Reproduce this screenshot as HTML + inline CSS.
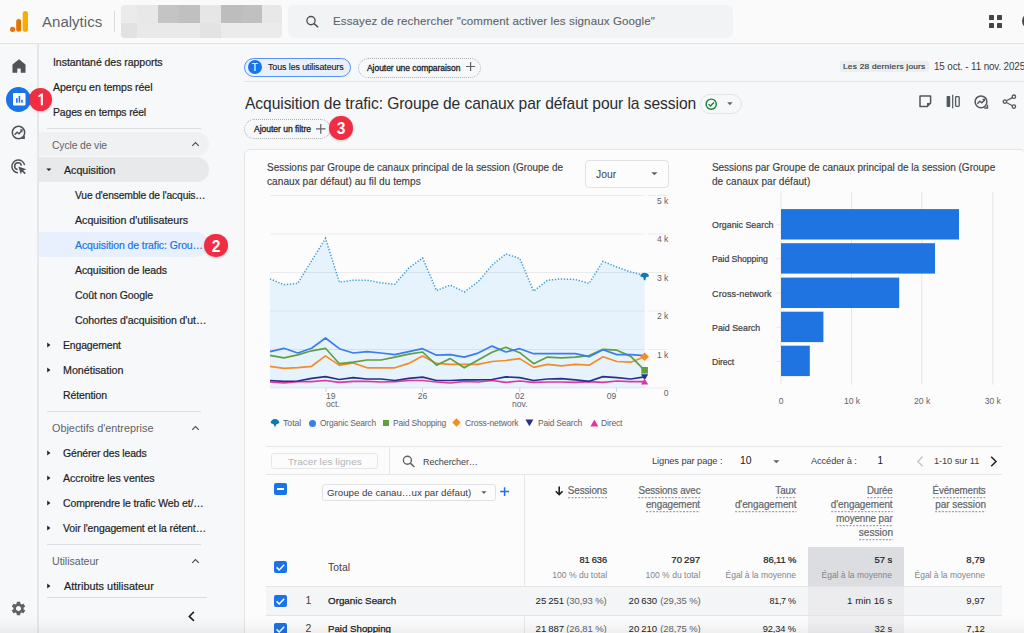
<!DOCTYPE html>
<html><head><meta charset="utf-8"><style>
html,body{margin:0;padding:0;}
body{width:1024px;height:633px;overflow:hidden;position:relative;background:#f6f8fa;font-family:"Liberation Sans",sans-serif;}
.t{position:absolute;white-space:nowrap;}
svg{position:absolute;overflow:visible;}
</style></head><body>
<div style="position:absolute;left:0px;top:0px;width:1024px;height:43px;background:#fafafa;"></div>
<div style="position:absolute;left:0px;top:43px;width:1024px;height:1px;background:#e2e3e5;"></div>
<svg style="left:0;top:0" width="40" height="40"><circle cx="12.6" cy="29.3" r="2.6" fill="#e8710a"/><rect x="16.2" y="19" width="5" height="12.8" rx="2.5" fill="#e37400"/><rect x="22.7" y="10.9" width="5.3" height="20.9" rx="2.65" fill="#f9ab00"/></svg>
<div class="t" id="t0" style="left:41.60px;transform:scaleX(1.0061);transform-origin:0 0;top:15.09px;font-size:14.9px;line-height:14.9px;color:#5f6368;font-weight:400;letter-spacing:0.027px;">Analytics</div>
<div style="position:absolute;left:114px;top:11px;width:1px;height:21px;background:#dadce0;"></div>
<div style="position:absolute;left:121px;top:5px;width:161px;height:33px;border-radius:4px;overflow:hidden"><div style="position:absolute;left:0px;top:0;width:16.5px;height:18px;background:#ebebeb"></div><div style="position:absolute;left:16px;top:0;width:21.5px;height:18px;background:#e8e8e8"></div><div style="position:absolute;left:37px;top:0;width:21.5px;height:18px;background:#c4c4c4"></div><div style="position:absolute;left:58px;top:0;width:21.5px;height:18px;background:#c0c0c0"></div><div style="position:absolute;left:79px;top:0;width:21.0px;height:18px;background:#e6e6e6"></div><div style="position:absolute;left:99.5px;top:0;width:21.5px;height:18px;background:#bdbdbd"></div><div style="position:absolute;left:120.5px;top:0;width:21.0px;height:18px;background:#c0c0c0"></div><div style="position:absolute;left:141px;top:0;width:20.5px;height:18px;background:#e8e8e8"></div><div style="position:absolute;left:0px;top:18px;width:16.5px;height:15px;background:#e2e2e2"></div><div style="position:absolute;left:16px;top:18px;width:21.5px;height:15px;background:#e9e9e9"></div><div style="position:absolute;left:37px;top:18px;width:21.5px;height:15px;background:#e9e9e9"></div><div style="position:absolute;left:58px;top:18px;width:21.5px;height:15px;background:#e9e9e9"></div><div style="position:absolute;left:79px;top:18px;width:21.0px;height:15px;background:#e3e3e3"></div><div style="position:absolute;left:99.5px;top:18px;width:21.5px;height:15px;background:#ebebeb"></div><div style="position:absolute;left:120.5px;top:18px;width:21.0px;height:15px;background:#ebebeb"></div><div style="position:absolute;left:141px;top:18px;width:20.5px;height:15px;background:#ebebeb"></div></div>
<div style="position:absolute;left:288px;top:5px;width:445px;height:33px;background:#f1f3f4;border-radius:6px"></div>
<svg style="left:305px;top:15px" width="16" height="14" viewBox="0 0 16 14"><circle cx="6" cy="5.6" r="4.1" fill="none" stroke="#4d5156" stroke-width="1.35"/><line x1="9" y1="8.6" x2="13.2" y2="12.2" stroke="#4d5156" stroke-width="1.5"/></svg>
<div class="t" id="t1" style="left:332.60px;transform:scaleX(1.0315);transform-origin:0 0;top:15.62px;font-size:11.2px;line-height:11.2px;color:#5f6368;font-weight:400;letter-spacing:0.110px;-webkit-text-stroke:0.1px #5f6368;">Essayez de rechercher "comment activer les signaux Google"</div>
<div style="position:absolute;left:989px;top:15px;width:5px;height:5px;background:#444746;border-radius:0.6px"></div>
<div style="position:absolute;left:997px;top:15px;width:5px;height:5px;background:#444746;border-radius:0.6px"></div>
<div style="position:absolute;left:989px;top:23px;width:5px;height:5px;background:#444746;border-radius:0.6px"></div>
<div style="position:absolute;left:997px;top:23px;width:5px;height:5px;background:#444746;border-radius:0.6px"></div>
<div style="position:absolute;left:1021.6px;top:13.3px;width:16px;height:16px;border-radius:50%;background:#44474b"></div>
<div style="position:absolute;left:36.6px;top:44px;width:2px;height:589px;background:#e6e7ea;"></div>
<svg style="left:12px;top:59px" width="14" height="14" viewBox="0 0 14 14"><path d="M0.8 5.6 L7 0.6 L13.2 5.6 V13.4 H9 V9.2 H5 V13.4 H0.8 Z" fill="#505459" stroke="#505459" stroke-width="0.6" stroke-linejoin="round"/></svg>
<div style="position:absolute;left:6px;top:87px;width:25px;height:25px;border-radius:50%;background:#1a73e8"></div>
<svg style="left:12.5px;top:93px" width="13" height="13" viewBox="0 0 13 13"><rect x="0" y="0" width="12.5" height="12.5" rx="1.2" fill="#fff"/><rect x="3" y="5.2" width="1.6" height="4.5" fill="#1a73e8"/><rect x="5.6" y="3" width="1.6" height="6.7" fill="#1a73e8"/><rect x="8.2" y="6.8" width="1.6" height="2.9" fill="#1a73e8"/></svg>
<svg style="left:11px;top:125px" width="16" height="16" viewBox="0 0 16 16"><circle cx="7.5" cy="7.5" r="6.2" fill="none" stroke="#505459" stroke-width="1.5"/><path d="M3.6 9.8 L6.2 7.2 L8 8.8 L10.6 6" fill="none" stroke="#505459" stroke-width="1.5"/><path d="M8.6 4.6 L11.8 4.2 L11.4 7.4 Z" fill="#505459"/><path d="M10.2 13.9 L13.9 13.9 L13.9 10.2 Z" fill="#505459"/></svg>
<svg style="left:11px;top:159px" width="17" height="16" viewBox="0 0 17 16"><path d="M13.6 6.2 A6.4 6.4 0 1 0 7 13.8" fill="none" stroke="#505459" stroke-width="1.5"/><path d="M10.4 6.6 A3.4 3.4 0 1 0 6.6 10.6" fill="none" stroke="#505459" stroke-width="1.5"/><path d="M7.4 7.4 L15.4 10.2 L12.2 11.4 L14.8 14 L13.6 15.2 L11 12.6 L9.8 15.6 Z" fill="#505459"/></svg>
<svg style="left:10px;top:600.4px" width="17" height="17" viewBox="0 0 24 24"><path fill="#5f6368" d="M19.14 12.94c.04-.3.06-.61.06-.94 0-.32-.02-.64-.07-.94l2.03-1.58c.18-.14.23-.41.12-.61l-1.92-3.32c-.12-.22-.37-.29-.59-.22l-2.39.96c-.5-.38-1.03-.7-1.62-.94l-.36-2.54c-.04-.24-.24-.41-.48-.41h-3.84c-.24 0-.43.17-.47.41l-.36 2.54c-.59.24-1.13.57-1.62.94l-2.39-.96c-.22-.08-.47 0-.59.22L2.74 8.87c-.12.21-.08.47.12.61l2.03 1.58c-.05.3-.09.63-.09.94s.02.64.07.94l-2.03 1.58c-.18.14-.23.41-.12.61l1.92 3.32c.12.22.37.29.59.22l2.39-.96c.5.38 1.03.7 1.62.94l.36 2.54c.05.24.24.41.48.41h3.84c.24 0 .44-.17.47-.41l.36-2.54c.59-.24 1.13-.56 1.62-.94l2.39.96c.22.08.47 0 .59-.22l1.92-3.32c.12-.22.07-.47-.12-.61l-2.01-1.58zM12 15.6c-1.98 0-3.6-1.62-3.6-3.6s1.62-3.6 3.6-3.6 3.6 1.62 3.6 3.6-1.62 3.6-3.6 3.6z"/></svg>
<div class="t" id="t2" style="left:52.50px;transform:scaleX(0.9789);transform-origin:0 0;top:57.26px;font-size:10.8px;line-height:10.8px;color:#1f1f1f;font-weight:400;letter-spacing:-0.069px;-webkit-text-stroke:0.2px #1f1f1f;">Instantané des rapports</div>
<div class="t" id="t3" style="left:52.50px;transform:scaleX(0.9816);transform-origin:0 0;top:81.96px;font-size:10.8px;line-height:10.8px;color:#1f1f1f;font-weight:400;letter-spacing:-0.063px;-webkit-text-stroke:0.2px #1f1f1f;">Aperçu en temps réel</div>
<div class="t" id="t4" style="left:52.50px;transform:scaleX(0.9630);transform-origin:0 0;top:107.06px;font-size:10.8px;line-height:10.8px;color:#1f1f1f;font-weight:400;letter-spacing:-0.129px;-webkit-text-stroke:0.2px #1f1f1f;">Pages en temps réel</div>
<div style="position:absolute;left:46.6px;top:128px;width:154px;height:1px;background:#dadce0;"></div>
<div style="position:absolute;left:39px;top:132.4px;width:170px;height:23.6px;background:#f0f1f3;border-radius:0 12px 12px 0"></div>
<div class="t" id="t5" style="left:52.20px;transform:scaleX(0.9606);transform-origin:0 0;top:139.96px;font-size:10.8px;line-height:10.8px;color:#5f6368;font-weight:400;letter-spacing:-0.130px;">Cycle de vie</div>
<svg style="left:190.5px;top:141px" width="9" height="6" viewBox="0 0 9 6"><path d="M1.2 4.9 L4.5 1.6 L7.8 4.9" fill="none" stroke="#4d5156" stroke-width="1.25"/></svg>
<div style="position:absolute;left:39px;top:157.2px;width:170.4px;height:24.6px;background:#e8e9eb;border-radius:0 12.3px 12.3px 0"></div>
<svg style="left:45.8px;top:167.8px" width="6" height="4" viewBox="0 0 6 4"><path d="M0.3 0.4 L5.4 0.4 L2.85 3.1 Z" fill="#202124"/></svg>
<div class="t" id="t6" style="left:63.70px;transform:scaleX(0.9906);transform-origin:0 0;top:165.06px;font-size:10.8px;line-height:10.8px;color:#1f1f1f;font-weight:400;letter-spacing:-0.030px;-webkit-text-stroke:0.2px #1f1f1f;">Acquisition</div>
<div class="t" id="t7" style="left:75.00px;transform:scaleX(0.9539);transform-origin:0 0;top:190.06px;font-size:10.8px;line-height:10.8px;color:#1f1f1f;font-weight:400;letter-spacing:-0.162px;-webkit-text-stroke:0.2px #1f1f1f;">Vue d'ensemble de l'acquis…</div>
<div class="t" id="t8" style="left:75.00px;transform:scaleX(0.9901);transform-origin:0 0;top:214.86px;font-size:10.8px;line-height:10.8px;color:#1f1f1f;font-weight:400;letter-spacing:-0.029px;-webkit-text-stroke:0.2px #1f1f1f;">Acquisition d'utilisateurs</div>
<div style="position:absolute;left:39px;top:232px;width:169px;height:25px;background:#e8f0fe;border-radius:0 12.5px 12.5px 0"></div>
<div class="t" id="t9" style="left:75.00px;transform:scaleX(0.9711);transform-origin:0 0;top:239.86px;font-size:10.8px;line-height:10.8px;color:#1a73e8;font-weight:400;letter-spacing:-0.093px;-webkit-text-stroke:0.2px #1a73e8;">Acquisition de trafic: Grou…</div>
<div class="t" id="t10" style="left:75.00px;transform:scaleX(0.9739);transform-origin:0 0;top:264.86px;font-size:10.8px;line-height:10.8px;color:#1f1f1f;font-weight:400;letter-spacing:-0.084px;-webkit-text-stroke:0.2px #1f1f1f;">Acquisition de leads</div>
<div class="t" id="t11" style="left:75.00px;transform:scaleX(0.9730);transform-origin:0 0;top:289.86px;font-size:10.8px;line-height:10.8px;color:#1f1f1f;font-weight:400;letter-spacing:-0.098px;-webkit-text-stroke:0.2px #1f1f1f;">Coût non Google</div>
<div class="t" id="t12" style="left:75.00px;transform:scaleX(0.9763);transform-origin:0 0;top:314.86px;font-size:10.8px;line-height:10.8px;color:#1f1f1f;font-weight:400;letter-spacing:-0.078px;-webkit-text-stroke:0.2px #1f1f1f;">Cohortes d'acquisition d'ut…</div>
<svg style="left:47.1px;top:342.4px" width="4" height="6" viewBox="0 0 4 6"><path d="M0.2 0.4 L3.4 3 L0.2 5.6 Z" fill="#202124"/></svg>
<div class="t" id="t13" style="left:63.40px;transform:scaleX(0.9670);transform-origin:0 0;top:340.06px;font-size:10.8px;line-height:10.8px;color:#1f1f1f;font-weight:400;letter-spacing:-0.136px;-webkit-text-stroke:0.2px #1f1f1f;">Engagement</div>
<svg style="left:47.1px;top:367.4px" width="4" height="6" viewBox="0 0 4 6"><path d="M0.2 0.4 L3.4 3 L0.2 5.6 Z" fill="#202124"/></svg>
<div class="t" id="t14" style="left:63.40px;transform:scaleX(0.9920);transform-origin:0 0;top:365.06px;font-size:10.8px;line-height:10.8px;color:#1f1f1f;font-weight:400;letter-spacing:-0.027px;-webkit-text-stroke:0.2px #1f1f1f;">Monétisation</div>
<div class="t" id="t15" style="left:63.40px;transform:scaleX(0.9707);transform-origin:0 0;top:390.06px;font-size:10.8px;line-height:10.8px;color:#1f1f1f;font-weight:400;letter-spacing:-0.101px;-webkit-text-stroke:0.2px #1f1f1f;">Rétention</div>
<div style="position:absolute;left:47px;top:411.3px;width:153.5px;height:1px;background:#dadce0;"></div>
<div class="t" id="t16" style="left:52.20px;transform:scaleX(1.0024);transform-origin:0 0;top:423.36px;font-size:10.8px;line-height:10.8px;color:#5f6368;font-weight:400;letter-spacing:0.007px;">Objectifs d'entreprise</div>
<svg style="left:190.5px;top:424.5px" width="9" height="6" viewBox="0 0 9 6"><path d="M1.2 4.9 L4.5 1.6 L7.8 4.9" fill="none" stroke="#4d5156" stroke-width="1.25"/></svg>
<svg style="left:47.1px;top:450.4px" width="4" height="6" viewBox="0 0 4 6"><path d="M0.2 0.4 L3.4 3 L0.2 5.6 Z" fill="#202124"/></svg>
<div class="t" id="t17" style="left:63.40px;transform:scaleX(0.9643);transform-origin:0 0;top:448.06px;font-size:10.8px;line-height:10.8px;color:#1f1f1f;font-weight:400;letter-spacing:-0.125px;-webkit-text-stroke:0.2px #1f1f1f;">Générer des leads</div>
<svg style="left:47.1px;top:475.4px" width="4" height="6" viewBox="0 0 4 6"><path d="M0.2 0.4 L3.4 3 L0.2 5.6 Z" fill="#202124"/></svg>
<div class="t" id="t18" style="left:63.40px;transform:scaleX(0.9832);transform-origin:0 0;top:473.06px;font-size:10.8px;line-height:10.8px;color:#1f1f1f;font-weight:400;letter-spacing:-0.053px;-webkit-text-stroke:0.2px #1f1f1f;">Accroitre les ventes</div>
<svg style="left:47.1px;top:500.4px" width="4" height="6" viewBox="0 0 4 6"><path d="M0.2 0.4 L3.4 3 L0.2 5.6 Z" fill="#202124"/></svg>
<div class="t" id="t19" style="left:63.40px;transform:scaleX(0.9672);transform-origin:0 0;top:498.06px;font-size:10.8px;line-height:10.8px;color:#1f1f1f;font-weight:400;letter-spacing:-0.113px;-webkit-text-stroke:0.2px #1f1f1f;">Comprendre le trafic Web et/…</div>
<svg style="left:47.1px;top:525.4px" width="4" height="6" viewBox="0 0 4 6"><path d="M0.2 0.4 L3.4 3 L0.2 5.6 Z" fill="#202124"/></svg>
<div class="t" id="t20" style="left:63.40px;transform:scaleX(0.9682);transform-origin:0 0;top:523.06px;font-size:10.8px;line-height:10.8px;color:#1f1f1f;font-weight:400;letter-spacing:-0.104px;-webkit-text-stroke:0.2px #1f1f1f;">Voir l'engagement et la rétent…</div>
<div style="position:absolute;left:46.9px;top:544px;width:154px;height:1px;background:#dadce0;"></div>
<div class="t" id="t21" style="left:52.30px;transform:scaleX(0.9847);transform-origin:0 0;top:556.26px;font-size:10.8px;line-height:10.8px;color:#5f6368;font-weight:400;letter-spacing:-0.045px;">Utilisateur</div>
<svg style="left:190.5px;top:557.5px" width="9" height="6" viewBox="0 0 9 6"><path d="M1.2 4.9 L4.5 1.6 L7.8 4.9" fill="none" stroke="#4d5156" stroke-width="1.25"/></svg>
<svg style="left:47.1px;top:582.9px" width="4" height="6" viewBox="0 0 4 6"><path d="M0.2 0.4 L3.4 3 L0.2 5.6 Z" fill="#202124"/></svg>
<div class="t" id="t22" style="left:63.70px;transform:scaleX(1.0067);transform-origin:0 0;top:581.36px;font-size:10.8px;line-height:10.8px;color:#1f1f1f;font-weight:400;letter-spacing:0.019px;-webkit-text-stroke:0.2px #1f1f1f;">Attributs utilisateur</div>
<div style="position:absolute;left:46.9px;top:597.2px;width:160.5px;height:1px;background:#dadce0;"></div>
<svg style="left:187px;top:611px" width="9" height="11" viewBox="0 0 9 11"><path d="M6.9 0.9 L2.3 5.4 L6.9 9.9" fill="none" stroke="#202124" stroke-width="1.6"/></svg>
<div style="position:absolute;left:28.8px;top:87.8px;width:23.4px;height:23.4px;border-radius:50%;background:#f12d43;box-shadow:0 1px 2.5px rgba(0,0,0,0.18)"></div>
<svg style="left:35.5px;top:92.5px" width="10" height="14" viewBox="0 0 10 14"><path d="M5.4 0.6 H6.9 V12.2 H4.8 V3.2 L2.4 4.2 V2.4 Z" fill="#fff"/></svg>
<div style="position:absolute;left:204.4px;top:233.60000000000002px;width:23.4px;height:23.4px;border-radius:50%;background:#f12d43;box-shadow:0 1px 2.5px rgba(0,0,0,0.18)"></div>
<div class="t" id="t23" style="left:216.10px;transform:translateX(-50%) ;top:238.89px;font-size:15.6px;line-height:15.6px;color:#fff;font-weight:700;">2</div>
<div style="position:absolute;left:244.3px;top:57.6px;width:104.6px;height:17.2px;border:1.3px solid #5591f5;border-radius:10px;background:#e8f0fe"></div>
<div style="position:absolute;left:247.7px;top:60.4px;width:14px;height:14px;border-radius:50%;background:#1a73e8"></div>
<div class="t" id="t24" style="left:254.70px;transform:translateX(-50%) ;top:63.33px;font-size:10px;line-height:10px;color:#fff;font-weight:400;-webkit-text-stroke:0.1px #fff;">T</div>
<div class="t" id="t25" style="left:267.50px;transform:scaleX(0.9654);transform-origin:0 0;top:62.91px;font-size:9.2px;line-height:9.2px;color:#202124;font-weight:400;letter-spacing:-0.089px;-webkit-text-stroke:0.15px #202124;">Tous les utilisateurs</div>
<div style="position:absolute;left:357.5px;top:57.7px;width:121.6px;height:18.2px;border:1px dotted #a9acb0;border-radius:10px"></div>
<div class="t" id="t26" style="left:367.10px;transform:scaleX(0.9800);transform-origin:0 0;top:63.54px;font-size:8.7px;line-height:8.7px;color:#202124;font-weight:400;letter-spacing:-0.056px;-webkit-text-stroke:0.3px #202124;">Ajouter une comparaison</div>
<svg style="left:466px;top:62.3px" width="10" height="10" viewBox="0 0 10 10"><path d="M4.6 0 V9 M0 4.5 H9.1" stroke="#5f6368" stroke-width="1.2"/></svg>
<div style="position:absolute;left:244px;top:80.6px;width:780px;height:1px;background:#e1e3e6;"></div>
<div style="position:absolute;left:840px;top:61px;width:88.6px;height:11.2px;background:#eceef0;border-radius:2px"></div>
<div class="t" id="t27" style="left:842.50px;transform:scaleX(1.0950);transform-origin:0 0;top:63.27px;font-size:7.6px;line-height:7.6px;color:#3c4043;font-weight:400;letter-spacing:0.211px;-webkit-text-stroke:0.2px #3c4043;">Les 28 derniers jours</div>
<div class="t" id="t28" style="left:933.50px;transform:scaleX(0.9621);transform-origin:0 0;top:62.17px;font-size:10.2px;line-height:10.2px;color:#3c4043;font-weight:400;letter-spacing:-0.112px;">15 oct. - 11 nov. 2025</div>
<div class="t" id="t29" style="left:244.60px;transform:scaleX(0.9824);transform-origin:0 0;top:96.14px;font-size:15.9px;line-height:15.9px;color:#2b2d30;font-weight:400;letter-spacing:-0.083px;">Acquisition de trafic: Groupe de canaux par défaut pour la session</div>
<div style="position:absolute;left:700px;top:94px;width:40px;height:18px;border:1px solid #e3e3e3;border-radius:10px"></div>
<svg style="left:705px;top:97.5px" width="13" height="13" viewBox="0 0 13 13"><circle cx="6.2" cy="6.2" r="5.1" fill="none" stroke="#188038" stroke-width="1.4"/><path d="M3.6 6.3 L5.5 8.1 L8.9 4.5" fill="none" stroke="#188038" stroke-width="1.4"/></svg>
<svg style="left:726.5px;top:101.5px" width="6" height="4" viewBox="0 0 6 4"><path d="M0.2 0.3 L5.6 0.3 L2.9 3.2 Z" fill="#5f6368"/></svg>
<div style="position:absolute;left:244.4px;top:118.9px;width:85px;height:18.4px;border:1px dotted #a9acb0;border-radius:10px"></div>
<div class="t" id="t30" style="left:253.60px;transform:scaleX(0.9852);transform-origin:0 0;top:125.19px;font-size:8.7px;line-height:8.7px;color:#202124;font-weight:400;letter-spacing:-0.034px;-webkit-text-stroke:0.3px #202124;">Ajouter un filtre</div>
<svg style="left:316px;top:123.6px" width="10" height="10" viewBox="0 0 10 10"><path d="M4.75 0 V9.7 M0 4.85 H9.5" stroke="#5f6368" stroke-width="1.2"/></svg>
<div style="position:absolute;left:329.40000000000003px;top:116.2px;width:23.4px;height:23.4px;border-radius:50%;background:#f12d43;box-shadow:0 1px 2.5px rgba(0,0,0,0.18)"></div>
<div class="t" id="t31" style="left:341.10px;transform:translateX(-50%) ;top:121.49px;font-size:15.6px;line-height:15.6px;color:#fff;font-weight:700;">3</div>
<svg style="left:919px;top:95.4px" width="13" height="13" viewBox="0 0 13 13"><path d="M1 1 H11.6 V8 L8 11.6 H1 Z" fill="none" stroke="#54585d" stroke-width="1.5" stroke-linejoin="round"/><path d="M8 11.8 V8 H11.8 Z" fill="#54585d"/></svg>
<svg style="left:946px;top:95.4px" width="15" height="13" viewBox="0 0 15 13"><rect x="0.6" y="1" width="3.6" height="11" rx="0.8" fill="#54585d"/><rect x="6.1" y="-0.2" width="1.2" height="13.6" fill="#54585d"/><rect x="9.6" y="1.6" width="3.6" height="9.8" rx="0.8" fill="none" stroke="#54585d" stroke-width="1.3"/></svg>
<svg style="left:973.5px;top:95.2px" width="15" height="14" viewBox="0 0 15 14"><circle cx="7" cy="6.8" r="5.9" fill="none" stroke="#54585d" stroke-width="1.5"/><path d="M3.4 8.8 L5.8 6.2 L7.8 7.8 L10 5.4" fill="none" stroke="#54585d" stroke-width="1.5"/><path d="M8 4 L11.2 3.6 L10.8 6.8 Z" fill="#54585d"/><path d="M10.2 13 H13.4 V9.8" fill="none" stroke="#54585d" stroke-width="1.5"/></svg>
<svg style="left:1001.5px;top:94px" width="15" height="15" viewBox="0 0 15 15"><circle cx="11.9" cy="2.7" r="1.7" fill="none" stroke="#54585d" stroke-width="1.3"/><circle cx="2.9" cy="7.6" r="1.7" fill="none" stroke="#54585d" stroke-width="1.3"/><circle cx="11.9" cy="12.6" r="1.7" fill="none" stroke="#54585d" stroke-width="1.3"/><path d="M4.4 6.7 L10.4 3.6 M4.4 8.5 L10.4 11.7" stroke="#54585d" stroke-width="1.2"/></svg>
<div style="position:absolute;left:243.7px;top:149.2px;width:780.3px;height:600px;border:1px solid #e3e4e6;border-radius:6px;background:#fcfcfd"></div>
<div class="t" id="t32" style="left:266.70px;transform:scaleX(0.9972);transform-origin:0 0;top:162.64px;font-size:10px;line-height:10px;color:#3c4043;font-weight:400;letter-spacing:-0.009px;-webkit-text-stroke:0.15px #3c4043;">Sessions par Groupe de canaux principal de la session (Groupe de</div>
<div class="t" id="t33" style="left:266.70px;transform:scaleX(1.0103);transform-origin:0 0;top:176.74px;font-size:10px;line-height:10px;color:#3c4043;font-weight:400;letter-spacing:0.030px;-webkit-text-stroke:0.15px #3c4043;">canaux par défaut) au fil du temps</div>
<div style="position:absolute;left:585.3px;top:160.3px;width:82.2px;height:25.3px;border:1px solid #dfe1e4;border-radius:4px"></div>
<div class="t" id="t34" style="left:596.30px;transform:scaleX(1.0050);transform-origin:0 0;top:169.68px;font-size:10.3px;line-height:10.3px;color:#3c4043;font-weight:400;letter-spacing:0.017px;">Jour</div>
<svg style="left:650.5px;top:172.3px" width="7" height="4" viewBox="0 0 7 4"><path d="M0.3 0.3 L6.5 0.3 L3.4 3.3 Z" fill="#5f6368"/></svg>
<svg style="left:0;top:0" width="1024" height="633"><rect x="647.4" y="387.50" width="20" height="1" fill="#ececec"/><rect x="647.4" y="349.00" width="20" height="1" fill="#ececec"/><rect x="647.4" y="310.50" width="20" height="1" fill="#ececec"/><rect x="647.4" y="272.00" width="20" height="1" fill="#ececec"/><rect x="647.4" y="233.50" width="20" height="1" fill="#ececec"/><rect x="647.4" y="195.00" width="20" height="1" fill="#ececec"/><polygon points="270.00,388 270.00,278.90 283.88,284.70 297.75,283.40 311.62,260.80 325.50,238.40 339.38,282.20 353.25,280.20 367.12,280.20 381.00,282.80 394.88,284.30 408.75,268.10 422.62,258.00 436.50,290.60 450.38,285.10 464.25,292.00 478.12,281.80 492.00,265.20 505.88,254.00 519.75,258.40 533.62,291.20 547.50,280.20 561.38,278.90 575.25,279.50 589.12,283.40 603.00,261.30 616.88,267.10 630.75,272.00 644.62,275.40 644.62,388" fill="#e6f3fc"/><rect x="270" y="387.50" width="374.6" height="1" fill="rgba(0,0,0,0.065)"/><rect x="270" y="349.00" width="374.6" height="1" fill="rgba(0,0,0,0.065)"/><rect x="270" y="310.50" width="374.6" height="1" fill="rgba(0,0,0,0.065)"/><rect x="270" y="272.00" width="374.6" height="1" fill="rgba(0,0,0,0.065)"/><rect x="270" y="233.50" width="374.6" height="1" fill="rgba(0,0,0,0.065)"/><rect x="270" y="195.00" width="374.6" height="1" fill="rgba(0,0,0,0.065)"/><polyline points="270.00,278.90 283.88,284.70 297.75,283.40 311.62,260.80 325.50,238.40 339.38,282.20 353.25,280.20 367.12,280.20 381.00,282.80 394.88,284.30 408.75,268.10 422.62,258.00 436.50,290.60 450.38,285.10 464.25,292.00 478.12,281.80 492.00,265.20 505.88,254.00 519.75,258.40 533.62,291.20 547.50,280.20 561.38,278.90 575.25,279.50 589.12,283.40 603.00,261.30 616.88,267.10 630.75,272.00 644.62,275.40" fill="none" stroke="#3f9bd3" stroke-width="1.5" stroke-dasharray="1.3 1.7"/><polyline points="270.00,382.00 283.88,383.00 297.75,381.60 311.62,381.60 325.50,380.50 339.38,382.30 353.25,381.30 367.12,381.30 381.00,382.00 394.88,381.60 408.75,380.50 422.62,380.50 436.50,382.00 450.38,383.00 464.25,381.30 478.12,382.00 492.00,380.50 505.88,382.40 519.75,381.00 533.62,382.40 547.50,382.00 561.38,382.00 575.25,382.40 589.12,381.60 603.00,382.40 616.88,381.00 630.75,381.60 644.62,381.60" fill="none" stroke="#e0379a" stroke-width="1.7" stroke-linejoin="round"/><polyline points="270.00,380.50 283.88,381.30 297.75,381.00 311.62,378.30 325.50,376.60 339.38,379.50 353.25,377.60 367.12,379.00 381.00,379.00 394.88,380.50 408.75,378.30 422.62,377.20 436.50,380.50 450.38,380.50 464.25,379.80 478.12,379.80 492.00,379.50 505.88,376.90 519.75,377.60 533.62,380.50 547.50,379.00 561.38,378.60 575.25,379.80 589.12,381.30 603.00,376.60 616.88,377.60 630.75,379.00 644.62,376.90" fill="none" stroke="#28308a" stroke-width="1.7" stroke-linejoin="round"/><polyline points="270.00,366.30 283.88,368.40 297.75,367.60 311.62,366.30 325.50,355.90 339.38,365.40 353.25,363.00 367.12,367.80 381.00,367.80 394.88,367.80 408.75,363.40 422.62,356.10 436.50,363.40 450.38,364.40 464.25,364.40 478.12,364.40 492.00,361.50 505.88,360.50 519.75,358.60 533.62,367.40 547.50,364.40 561.38,365.90 575.25,364.40 589.12,365.20 603.00,356.70 616.88,361.50 630.75,362.20 644.62,356.70" fill="none" stroke="#f28c28" stroke-width="1.7" stroke-linejoin="round"/><polyline points="270.00,355.30 283.88,357.80 297.75,354.90 311.62,350.80 325.50,348.30 339.38,363.70 353.25,362.20 367.12,360.00 381.00,360.00 394.88,357.10 408.75,354.20 422.62,352.00 436.50,365.20 450.38,358.60 464.25,367.80 478.12,360.00 492.00,352.30 505.88,347.30 519.75,352.70 533.62,363.70 547.50,357.10 561.38,357.80 575.25,357.10 589.12,355.60 603.00,349.30 616.88,350.20 630.75,356.40 644.62,370.30" fill="none" stroke="#5f9f3f" stroke-width="1.7" stroke-linejoin="round"/><polyline points="270.00,351.70 283.88,348.30 297.75,353.00 311.62,348.30 325.50,338.00 339.38,348.70 353.25,353.00 367.12,351.70 381.00,353.00 394.88,354.60 408.75,351.70 422.62,348.70 436.50,355.20 450.38,354.60 464.25,357.10 478.12,353.10 492.00,346.10 505.88,352.00 519.75,348.70 533.62,353.70 547.50,353.70 561.38,353.70 575.25,353.70 589.12,356.70 603.00,349.80 616.88,354.60 630.75,354.60 644.62,355.60" fill="none" stroke="#3b7ded" stroke-width="1.7" stroke-linejoin="round"/><path d="M640.33,276.4 C640.02,271.6 649.23,271.6 648.92,276.4 L646.02,277.2 L645.33,280.2 L643.92,280.2 L643.23,277.2 Z" fill="#0b7ab8"/><path d="M644.62,352.4 L648.92,356.7 L644.62,361.0 L640.33,356.7 Z" fill="#f28c28"/><rect x="641.33" y="367.0" width="6.6" height="6.6" fill="#5f9f3f"/><path d="M641.02,374.2 L648.23,374.2 L644.62,380.2 Z" fill="#28308a"/><path d="M641.02,384.6 L648.23,384.6 L644.62,378.4 Z" fill="#e0379a"/><rect x="325.4" y="388" width="1" height="4" fill="#d0d2d5"/><rect x="422.0" y="388" width="1" height="4" fill="#d0d2d5"/><rect x="519.3" y="388" width="1" height="4" fill="#d0d2d5"/><rect x="615.9" y="388" width="1" height="4" fill="#d0d2d5"/><rect x="780.5" y="191.7" width="1" height="193" fill="#e6e6e6"/><rect x="851.0" y="191.7" width="1" height="193" fill="#e6e6e6"/><rect x="921.3" y="191.7" width="1" height="193" fill="#e6e6e6"/><rect x="992.2" y="191.7" width="1" height="193" fill="#e6e6e6"/><rect x="776.5" y="224.3" width="4.5" height="1" fill="#e6e6e6"/><rect x="776.5" y="258.3" width="4.5" height="1" fill="#e6e6e6"/><rect x="776.5" y="292.4" width="4.5" height="1" fill="#e6e6e6"/><rect x="776.5" y="326.8" width="4.5" height="1" fill="#e6e6e6"/><rect x="776.5" y="360.9" width="4.5" height="1" fill="#e6e6e6"/><rect x="781" y="209.1" width="178" height="30.4" fill="#1f74e1"/><rect x="781" y="243.2" width="154" height="30.4" fill="#1f74e1"/><rect x="781" y="277.6" width="118.20000000000005" height="30.4" fill="#1f74e1"/><rect x="781" y="311.7" width="42.39999999999998" height="30.4" fill="#1f74e1"/><rect x="781" y="345.7" width="28.799999999999955" height="30.4" fill="#1f74e1"/></svg>
<div class="t" id="t35" style="right:355.60px;top:389.32px;font-size:8.6px;line-height:8.6px;color:#5f6368;font-weight:400;">0</div>
<div class="t" id="t36" style="right:355.60px;top:350.82px;font-size:8.6px;line-height:8.6px;color:#5f6368;font-weight:400;">1 k</div>
<div class="t" id="t37" style="right:355.60px;top:312.32px;font-size:8.6px;line-height:8.6px;color:#5f6368;font-weight:400;">2 k</div>
<div class="t" id="t38" style="right:355.60px;top:273.82px;font-size:8.6px;line-height:8.6px;color:#5f6368;font-weight:400;">3 k</div>
<div class="t" id="t39" style="right:355.60px;top:235.32px;font-size:8.6px;line-height:8.6px;color:#5f6368;font-weight:400;">4 k</div>
<div class="t" id="t40" style="right:355.60px;top:196.82px;font-size:8.6px;line-height:8.6px;color:#5f6368;font-weight:400;">5 k</div>
<div class="t" id="t41" style="left:325.90px;top:391.52px;font-size:8.6px;line-height:8.6px;color:#5f6368;font-weight:400;">19</div>
<div class="t" id="t42" style="left:325.90px;top:399.82px;font-size:8.6px;line-height:8.6px;color:#5f6368;font-weight:400;">oct.</div>
<div class="t" id="t43" style="left:422.50px;transform:translateX(-50%) ;top:391.52px;font-size:8.6px;line-height:8.6px;color:#5f6368;font-weight:400;">26</div>
<div class="t" id="t44" style="left:519.80px;transform:translateX(-50%) ;top:391.52px;font-size:8.6px;line-height:8.6px;color:#5f6368;font-weight:400;">02</div>
<div class="t" id="t45" style="left:519.80px;transform:translateX(-50%) ;top:399.82px;font-size:8.6px;line-height:8.6px;color:#5f6368;font-weight:400;">nov.</div>
<div class="t" id="t46" style="right:407.60px;top:391.52px;font-size:8.6px;line-height:8.6px;color:#5f6368;font-weight:400;">09</div>
<svg style="left:269.5px;top:418.5px" width="10" height="9" viewBox="0 0 10 9"><path d="M0.6 4 A4.4 3.9 0 0 1 9.4 4 L6.2 5.6 L5 8.6 L3.8 5.6 Z" fill="#0b7ab8"/></svg>
<div class="t" id="t47" style="left:283.00px;transform:scaleX(0.9678);transform-origin:0 0;top:419.40px;font-size:9.1px;line-height:9.1px;color:#5f6368;font-weight:400;letter-spacing:-0.083px;">Total</div>
<div style="position:absolute;left:309.3px;top:419.6px;width:7px;height:7px;border-radius:50%;background:#3b7ded"></div>
<div class="t" id="t48" style="left:319.50px;transform:scaleX(0.9291);transform-origin:0 0;top:419.40px;font-size:9.1px;line-height:9.1px;color:#5f6368;font-weight:400;letter-spacing:-0.216px;">Organic Search</div>
<div style="position:absolute;left:382.6px;top:419.7px;width:6.8px;height:6.7px;background:#5f9f3f;"></div>
<div class="t" id="t49" style="left:393.20px;transform:scaleX(0.9371);transform-origin:0 0;top:419.40px;font-size:9.1px;line-height:9.1px;color:#5f6368;font-weight:400;letter-spacing:-0.193px;">Paid Shopping</div>
<svg style="left:451.5px;top:418.3px" width="9" height="9" viewBox="0 0 9 9"><path d="M4.5 0.3 L8.7 4.5 L4.5 8.7 L0.3 4.5 Z" fill="#f28c28"/></svg>
<div class="t" id="t50" style="left:465.00px;transform:scaleX(0.9466);transform-origin:0 0;top:419.40px;font-size:9.1px;line-height:9.1px;color:#5f6368;font-weight:400;letter-spacing:-0.162px;">Cross-network</div>
<svg style="left:525px;top:419px" width="9" height="8" viewBox="0 0 9 8"><path d="M0.4 0.4 L8.4 0.4 L4.4 7.2 Z" fill="#28308a"/></svg>
<div class="t" id="t51" style="left:538.10px;transform:scaleX(0.9312);transform-origin:0 0;top:419.40px;font-size:9.1px;line-height:9.1px;color:#5f6368;font-weight:400;letter-spacing:-0.209px;">Paid Search</div>
<svg style="left:589.5px;top:419px" width="9" height="8" viewBox="0 0 9 8"><path d="M0.4 7.4 L8.4 7.4 L4.4 0.6 Z" fill="#e0379a"/></svg>
<div class="t" id="t52" style="left:601.40px;transform:scaleX(0.9368);transform-origin:0 0;top:419.40px;font-size:9.1px;line-height:9.1px;color:#5f6368;font-weight:400;letter-spacing:-0.169px;">Direct</div>
<div class="t" id="t53" style="left:711.90px;top:162.64px;font-size:10px;line-height:10px;color:#3c4043;font-weight:400;letter-spacing:-0.003px;-webkit-text-stroke:0.15px #3c4043;">Sessions par Groupe de canaux principal de la session (Groupe</div>
<div class="t" id="t54" style="left:711.90px;transform:scaleX(1.0062);transform-origin:0 0;top:176.74px;font-size:10px;line-height:10px;color:#3c4043;font-weight:400;letter-spacing:0.019px;-webkit-text-stroke:0.15px #3c4043;">de canaux par défaut)</div>
<div class="t" id="t55" style="left:711.50px;transform:scaleX(1.0037);transform-origin:0 0;top:221.45px;font-size:8.8px;line-height:8.8px;color:#3c4043;font-weight:400;letter-spacing:0.011px;-webkit-text-stroke:0.2px #3c4043;">Organic Search</div>
<div class="t" id="t56" style="left:711.50px;transform:scaleX(0.9849);transform-origin:0 0;top:255.45px;font-size:8.8px;line-height:8.8px;color:#3c4043;font-weight:400;letter-spacing:-0.044px;-webkit-text-stroke:0.2px #3c4043;">Paid Shopping</div>
<div class="t" id="t57" style="left:711.50px;transform:scaleX(1.0314);transform-origin:0 0;top:289.55px;font-size:8.8px;line-height:8.8px;color:#3c4043;font-weight:400;letter-spacing:0.091px;-webkit-text-stroke:0.2px #3c4043;">Cross-network</div>
<div class="t" id="t58" style="left:711.50px;transform:scaleX(1.0033);transform-origin:0 0;top:323.95px;font-size:8.8px;line-height:8.8px;color:#3c4043;font-weight:400;letter-spacing:0.010px;-webkit-text-stroke:0.2px #3c4043;">Paid Search</div>
<div class="t" id="t59" style="left:711.50px;transform:scaleX(0.9794);transform-origin:0 0;top:358.05px;font-size:8.8px;line-height:8.8px;color:#3c4043;font-weight:400;letter-spacing:-0.053px;-webkit-text-stroke:0.2px #3c4043;">Direct</div>
<div class="t" id="t60" style="left:781.20px;transform:translateX(-50%) ;top:397.02px;font-size:8.6px;line-height:8.6px;color:#5f6368;font-weight:400;">0</div>
<div class="t" id="t61" style="left:852.00px;transform:translateX(-50%) ;top:397.02px;font-size:8.6px;line-height:8.6px;color:#5f6368;font-weight:400;">10 k</div>
<div class="t" id="t62" style="left:922.20px;transform:translateX(-50%) ;top:397.02px;font-size:8.6px;line-height:8.6px;color:#5f6368;font-weight:400;">20 k</div>
<div class="t" id="t63" style="left:992.80px;transform:translateX(-50%) ;top:397.02px;font-size:8.6px;line-height:8.6px;color:#5f6368;font-weight:400;">30 k</div>
<div style="position:absolute;left:266.4px;top:446.2px;width:736px;height:1px;background:#e6e7e9;"></div>
<div style="position:absolute;left:270.8px;top:453.4px;width:105.5px;height:13.6px;border:1px solid #e6e7e9;border-radius:3px"></div>
<div class="t" id="t64" style="left:287.80px;transform:scaleX(1.0190);transform-origin:0 0;top:457.10px;font-size:9.8px;line-height:9.8px;color:#b1b5b9;font-weight:400;letter-spacing:0.053px;">Tracer les lignes</div>
<div style="position:absolute;left:389px;top:446.7px;width:1px;height:27.8px;background:#e6e7e9;"></div>
<svg style="left:402px;top:455px" width="14" height="13" viewBox="0 0 14 13"><circle cx="5.4" cy="5.2" r="4" fill="none" stroke="#5f6368" stroke-width="1.4"/><line x1="8.3" y1="8.1" x2="12.4" y2="12" stroke="#5f6368" stroke-width="1.5"/></svg>
<div class="t" id="t65" style="left:422.50px;transform:scaleX(0.9681);transform-origin:0 0;top:457.44px;font-size:9.4px;line-height:9.4px;color:#3c4043;font-weight:400;letter-spacing:-0.112px;">Rechercher…</div>
<div class="t" id="t66" style="left:652.40px;transform:scaleX(0.9693);transform-origin:0 0;top:455.87px;font-size:9.6px;line-height:9.6px;color:#3c4043;font-weight:400;letter-spacing:-0.090px;">Lignes par page :</div>
<div class="t" id="t67" style="left:740.20px;transform:scaleX(1.0019);transform-origin:0 0;top:455.60px;font-size:10.4px;line-height:10.4px;color:#202124;font-weight:400;letter-spacing:0.007px;">10</div>
<svg style="left:773.4px;top:459.8px" width="7" height="4" viewBox="0 0 7 4"><path d="M0.3 0.3 L6.5 0.3 L3.4 3.3 Z" fill="#5f6368"/></svg>
<div class="t" id="t68" style="left:811.00px;transform:scaleX(0.9646);transform-origin:0 0;top:455.87px;font-size:9.6px;line-height:9.6px;color:#3c4043;font-weight:400;letter-spacing:-0.105px;">Accéder à :</div>
<div class="t" id="t69" style="left:877.40px;top:455.94px;font-size:10px;line-height:10px;color:#202124;font-weight:400;">1</div>
<svg style="left:915.5px;top:456px" width="8" height="11" viewBox="0 0 8 11"><path d="M6.6 0.8 L1.8 5.5 L6.6 10.2" fill="none" stroke="#c0c3c7" stroke-width="1.3"/></svg>
<div class="t" id="t70" style="left:934.00px;transform:scaleX(0.9667);transform-origin:0 0;top:455.87px;font-size:9.6px;line-height:9.6px;color:#3c4043;font-weight:400;letter-spacing:-0.097px;">1-10 sur 11</div>
<svg style="left:990px;top:456px" width="8" height="11" viewBox="0 0 8 11"><path d="M1.2 0.8 L6 5.5 L1.2 10.2" fill="none" stroke="#202124" stroke-width="1.5"/></svg>
<div style="position:absolute;left:266.4px;top:474.1px;width:736px;height:1px;background:#e6e7e9;"></div>
<div style="position:absolute;left:524px;top:474.5px;width:1px;height:160px;background:#e6e7e9;"></div>
<div style="position:absolute;left:274.3px;top:482.7px;width:12.6px;height:12.4px;border-radius:2px;background:#1a73e8"></div>
<div style="position:absolute;left:276.8px;top:488.2px;width:7.6px;height:1.6px;background:#fff;"></div>
<div style="position:absolute;left:321.5px;top:484.2px;width:172.4px;height:14.6px;border:1px solid #dfe1e4;border-radius:3px"></div>
<div class="t" id="t71" style="left:327.30px;transform:scaleX(0.9880);transform-origin:0 0;top:487.62px;font-size:9.9px;line-height:9.9px;color:#3c4043;font-weight:400;letter-spacing:-0.039px;">Groupe de canau…ux par défaut)</div>
<svg style="left:480.5px;top:491px" width="6" height="4" viewBox="0 0 6 4"><path d="M0.3 0.3 L5.5 0.3 L2.9 2.9 Z" fill="#5f6368"/></svg>
<svg style="left:500px;top:487px" width="10" height="10" viewBox="0 0 10 10"><path d="M4.6 0.2 V9 M0.2 4.6 H9" stroke="#1a73e8" stroke-width="1.5"/></svg>
<svg style="left:555px;top:486px" width="9" height="10" viewBox="0 0 9 10"><path d="M4.2 0.4 V8.6 M0.8 5.2 L4.2 8.6 L7.6 5.2" fill="none" stroke="#202124" stroke-width="1.6"/></svg>
<div class="t" id="t72" style="right:417.06px;transform:scaleX(0.9810);transform-origin:100% 0;top:485.64px;font-size:10px;line-height:10px;color:#5f6368;font-weight:400;letter-spacing:-0.065px;-webkit-text-stroke:0.2px #5f6368;">Sessions</div>
<svg style="left:567.70px;top:496.90px" width="39.30" height="2"><line x1="0.2" y1="0.6" x2="39.30" y2="0.6" stroke="#9aa0a6" stroke-width="1.2" stroke-dasharray="1.9 1.45"/></svg>
<div class="t" id="t73" style="right:323.78px;transform:scaleX(0.9767);transform-origin:100% 0;top:485.64px;font-size:10px;line-height:10px;color:#5f6368;font-weight:400;letter-spacing:-0.077px;-webkit-text-stroke:0.2px #5f6368;">Sessions avec</div>
<svg style="left:638.30px;top:496.90px" width="62.00" height="2"><line x1="0.2" y1="0.6" x2="62.00" y2="0.6" stroke="#9aa0a6" stroke-width="1.2" stroke-dasharray="1.9 1.45"/></svg>
<div class="t" id="t74" style="right:323.76px;transform:scaleX(0.9825);transform-origin:100% 0;top:499.64px;font-size:10px;line-height:10px;color:#5f6368;font-weight:400;letter-spacing:-0.065px;-webkit-text-stroke:0.2px #5f6368;">engagement</div>
<svg style="left:646.30px;top:510.90px" width="54.00" height="2"><line x1="0.2" y1="0.6" x2="54.00" y2="0.6" stroke="#9aa0a6" stroke-width="1.2" stroke-dasharray="1.9 1.45"/></svg>
<div class="t" id="t75" style="right:227.76px;transform:scaleX(0.9821);transform-origin:100% 0;top:485.64px;font-size:10px;line-height:10px;color:#5f6368;font-weight:400;letter-spacing:-0.063px;-webkit-text-stroke:0.2px #5f6368;">Taux</div>
<svg style="left:775.80px;top:496.90px" width="20.50" height="2"><line x1="0.2" y1="0.6" x2="20.50" y2="0.6" stroke="#9aa0a6" stroke-width="1.2" stroke-dasharray="1.9 1.45"/></svg>
<div class="t" id="t76" style="right:227.75px;transform:scaleX(0.9849);transform-origin:100% 0;top:499.64px;font-size:10px;line-height:10px;color:#5f6368;font-weight:400;letter-spacing:-0.053px;-webkit-text-stroke:0.2px #5f6368;">d'engagement</div>
<svg style="left:734.80px;top:510.90px" width="61.50" height="2"><line x1="0.2" y1="0.6" x2="61.50" y2="0.6" stroke="#9aa0a6" stroke-width="1.2" stroke-dasharray="1.9 1.45"/></svg>
<div class="t" id="t77" style="right:131.33px;transform:scaleX(0.9632);transform-origin:100% 0;top:485.64px;font-size:10px;line-height:10px;color:#5f6368;font-weight:400;letter-spacing:-0.134px;-webkit-text-stroke:0.2px #5f6368;">Durée</div>
<svg style="left:867.20px;top:496.90px" width="25.60" height="2"><line x1="0.2" y1="0.6" x2="25.60" y2="0.6" stroke="#9aa0a6" stroke-width="1.2" stroke-dasharray="1.9 1.45"/></svg>
<div class="t" id="t78" style="right:131.24px;transform:scaleX(0.9878);transform-origin:100% 0;top:499.64px;font-size:10px;line-height:10px;color:#5f6368;font-weight:400;letter-spacing:-0.043px;-webkit-text-stroke:0.2px #5f6368;">d'engagement</div>
<svg style="left:831.00px;top:510.90px" width="61.80" height="2"><line x1="0.2" y1="0.6" x2="61.80" y2="0.6" stroke="#9aa0a6" stroke-width="1.2" stroke-dasharray="1.9 1.45"/></svg>
<div class="t" id="t79" style="right:131.27px;transform:scaleX(0.9796);transform-origin:100% 0;top:513.63px;font-size:10px;line-height:10px;color:#5f6368;font-weight:400;letter-spacing:-0.073px;-webkit-text-stroke:0.2px #5f6368;">moyenne par</div>
<svg style="left:836.40px;top:524.90px" width="56.40" height="2"><line x1="0.2" y1="0.6" x2="56.40" y2="0.6" stroke="#9aa0a6" stroke-width="1.2" stroke-dasharray="1.9 1.45"/></svg>
<div class="t" id="t80" style="right:131.18px;transform:scaleX(1.0052);transform-origin:100% 0;top:527.63px;font-size:10px;line-height:10px;color:#5f6368;font-weight:400;letter-spacing:0.017px;-webkit-text-stroke:0.2px #5f6368;">session</div>
<svg style="left:858.60px;top:538.90px" width="34.20" height="2"><line x1="0.2" y1="0.6" x2="34.20" y2="0.6" stroke="#9aa0a6" stroke-width="1.2" stroke-dasharray="1.9 1.45"/></svg>
<div class="t" id="t81" style="right:38.30px;transform:scaleX(0.9717);transform-origin:100% 0;top:485.64px;font-size:10px;line-height:10px;color:#5f6368;font-weight:400;letter-spacing:-0.105px;-webkit-text-stroke:0.2px #5f6368;">Événements</div>
<svg style="left:932.80px;top:496.90px" width="53.00" height="2"><line x1="0.2" y1="0.6" x2="53.00" y2="0.6" stroke="#9aa0a6" stroke-width="1.2" stroke-dasharray="1.9 1.45"/></svg>
<div class="t" id="t82" style="right:38.21px;transform:scaleX(0.9960);transform-origin:100% 0;top:499.64px;font-size:10px;line-height:10px;color:#5f6368;font-weight:400;letter-spacing:-0.012px;-webkit-text-stroke:0.2px #5f6368;">par session</div>
<svg style="left:935.00px;top:510.90px" width="50.80" height="2"><line x1="0.2" y1="0.6" x2="50.80" y2="0.6" stroke="#9aa0a6" stroke-width="1.2" stroke-dasharray="1.9 1.45"/></svg>
<div style="position:absolute;left:807.8px;top:547.4px;width:95.8px;height:38.9px;background:#dcdde0;"></div>
<div style="position:absolute;left:807.8px;top:586.3px;width:95.8px;height:29px;background:#ececee;"></div>
<div style="position:absolute;left:807.8px;top:615.3px;width:95.8px;height:20px;background:#f0f0f2;"></div>
<div style="position:absolute;left:274.3px;top:560.5px;width:12.6px;height:12.4px;border-radius:2px;background:#1a73e8"></div>
<svg style="left:274.3px;top:560.5px" width="13" height="13" viewBox="0 0 13 13"><path d="M2.6 6.4 L5.2 9 L10.2 3.8" fill="none" stroke="#fff" stroke-width="1.5"/></svg>
<div class="t" id="t83" style="left:328.00px;transform:scaleX(1.0130);transform-origin:0 0;top:562.77px;font-size:10.2px;line-height:10.2px;color:#3c4043;font-weight:400;letter-spacing:0.037px;">Total</div>
<div class="t" id="t84" style="right:417.05px;transform:scaleX(0.9516);transform-origin:100% 0;top:555.40px;font-size:9.8px;line-height:9.8px;color:#202124;font-weight:400;letter-spacing:-0.158px;-webkit-text-stroke:0.22px #202124;">81 636</div>
<div class="t" id="t85" style="right:416.90px;top:571.42px;font-size:8.6px;line-height:8.6px;color:#80868b;font-weight:400;letter-spacing:-0.002px;">100 % du total</div>
<div class="t" id="t86" style="right:323.73px;transform:scaleX(0.9893);transform-origin:100% 0;top:555.40px;font-size:9.8px;line-height:9.8px;color:#202124;font-weight:400;letter-spacing:-0.035px;-webkit-text-stroke:0.22px #202124;">70 297</div>
<div class="t" id="t87" style="right:323.70px;top:571.42px;font-size:8.6px;line-height:8.6px;color:#80868b;font-weight:400;letter-spacing:-0.002px;">100 % du total</div>
<div class="t" id="t88" style="right:228.03px;transform:scaleX(0.9615);transform-origin:100% 0;top:555.40px;font-size:9.8px;line-height:9.8px;color:#202124;font-weight:400;letter-spacing:-0.130px;-webkit-text-stroke:0.22px #202124;">86,11 %</div>
<div class="t" id="t89" style="right:227.92px;transform:scaleX(0.9933);transform-origin:100% 0;top:571.42px;font-size:8.6px;line-height:8.6px;color:#80868b;font-weight:400;letter-spacing:-0.019px;">Égal à la moyenne</div>
<div class="t" id="t90" style="right:131.90px;transform:scaleX(0.9662);transform-origin:100% 0;top:555.40px;font-size:9.8px;line-height:9.8px;color:#202124;font-weight:400;letter-spacing:-0.105px;-webkit-text-stroke:0.22px #202124;">57 s</div>
<div class="t" id="t91" style="right:131.82px;transform:scaleX(0.9933);transform-origin:100% 0;top:571.42px;font-size:8.6px;line-height:8.6px;color:#80868b;font-weight:400;letter-spacing:-0.019px;">Égal à la moyenne</div>
<div class="t" id="t92" style="right:39.06px;transform:scaleX(0.9817);transform-origin:100% 0;top:555.40px;font-size:9.8px;line-height:9.8px;color:#202124;font-weight:400;letter-spacing:-0.058px;-webkit-text-stroke:0.22px #202124;">8,79</div>
<div class="t" id="t93" style="right:39.02px;transform:scaleX(0.9933);transform-origin:100% 0;top:571.42px;font-size:8.6px;line-height:8.6px;color:#80868b;font-weight:400;letter-spacing:-0.019px;">Égal à la moyenne</div>
<div style="position:absolute;left:266.4px;top:586px;width:736px;height:1px;background:#e3e4e6;"></div>
<div style="position:absolute;left:266.4px;top:586.6px;width:541.4px;height:28.7px;background:#f4f5f7;"></div>
<div style="position:absolute;left:903.6px;top:586.6px;width:98.9px;height:28.7px;background:#f4f5f7;"></div>
<div style="position:absolute;left:266.4px;top:615px;width:736px;height:1px;background:#e3e4e6;"></div>
<div style="position:absolute;left:274.3px;top:595px;width:12.6px;height:12.4px;border-radius:2px;background:#1a73e8"></div>
<svg style="left:274.3px;top:595px" width="13" height="13" viewBox="0 0 13 13"><path d="M2.6 6.4 L5.2 9 L10.2 3.8" fill="none" stroke="#fff" stroke-width="1.5"/></svg>
<div style="position:absolute;left:274.3px;top:623.2px;width:12.6px;height:12.4px;border-radius:2px;background:#1a73e8"></div>
<svg style="left:274.3px;top:623.2px" width="13" height="13" viewBox="0 0 13 13"><path d="M2.6 6.4 L5.2 9 L10.2 3.8" fill="none" stroke="#fff" stroke-width="1.5"/></svg>
<div class="t" id="t94" style="left:305.60px;top:595.60px;font-size:10.4px;line-height:10.4px;color:#3c4043;font-weight:400;">1</div>
<div class="t" id="t95" style="left:328.00px;transform:scaleX(1.0011);transform-origin:0 0;top:596.10px;font-size:9.8px;line-height:9.8px;color:#202124;font-weight:400;letter-spacing:0.003px;-webkit-text-stroke:0.25px #202124;">Organic Search</div>
<div class="t" id="t96" style="right:416.99px;transform:scaleX(0.9703);transform-origin:100% 0;top:596.10px;font-size:9.8px;line-height:9.8px;color:#5f6368;font-weight:400;letter-spacing:-0.094px;">(30,93 %)</div>
<div class="t" id="t97" style="right:459.87px;transform:scaleX(0.9789);transform-origin:100% 0;top:596.10px;font-size:9.8px;line-height:9.8px;color:#202124;font-weight:400;letter-spacing:-0.069px;">25 251</div>
<div class="t" id="t98" style="right:323.79px;transform:scaleX(0.9703);transform-origin:100% 0;top:596.10px;font-size:9.8px;line-height:9.8px;color:#5f6368;font-weight:400;letter-spacing:-0.094px;">(29,35 %)</div>
<div class="t" id="t99" style="right:366.67px;transform:scaleX(0.9789);transform-origin:100% 0;top:596.10px;font-size:9.8px;line-height:9.8px;color:#202124;font-weight:400;letter-spacing:-0.069px;">20 630</div>
<div class="t" id="t100" style="right:228.17px;transform:scaleX(0.9126);transform-origin:100% 0;top:596.10px;font-size:9.8px;line-height:9.8px;color:#202124;font-weight:400;letter-spacing:-0.301px;">81,7 %</div>
<div class="t" id="t101" style="right:131.81px;transform:scaleX(0.9973);transform-origin:100% 0;top:596.10px;font-size:9.8px;line-height:9.8px;color:#202124;font-weight:400;letter-spacing:-0.008px;">1 min 16 s</div>
<div class="t" id="t102" style="right:39.06px;transform:scaleX(0.9817);transform-origin:100% 0;top:596.10px;font-size:9.8px;line-height:9.8px;color:#202124;font-weight:400;letter-spacing:-0.058px;">9,97</div>
<div class="t" id="t103" style="left:305.60px;top:623.60px;font-size:10.4px;line-height:10.4px;color:#3c4043;font-weight:400;">2</div>
<div class="t" id="t104" style="left:328.00px;transform:scaleX(0.9931);transform-origin:0 0;top:624.10px;font-size:9.8px;line-height:9.8px;color:#202124;font-weight:400;letter-spacing:-0.023px;-webkit-text-stroke:0.25px #202124;">Paid Shopping</div>
<div class="t" id="t105" style="right:416.99px;transform:scaleX(0.9703);transform-origin:100% 0;top:624.10px;font-size:9.8px;line-height:9.8px;color:#5f6368;font-weight:400;letter-spacing:-0.094px;">(26,81 %)</div>
<div class="t" id="t106" style="right:459.87px;transform:scaleX(0.9789);transform-origin:100% 0;top:624.10px;font-size:9.8px;line-height:9.8px;color:#202124;font-weight:400;letter-spacing:-0.069px;">21 887</div>
<div class="t" id="t107" style="right:323.79px;transform:scaleX(0.9703);transform-origin:100% 0;top:624.10px;font-size:9.8px;line-height:9.8px;color:#5f6368;font-weight:400;letter-spacing:-0.094px;">(28,75 %)</div>
<div class="t" id="t108" style="right:366.67px;transform:scaleX(0.9789);transform-origin:100% 0;top:624.10px;font-size:9.8px;line-height:9.8px;color:#202124;font-weight:400;letter-spacing:-0.069px;">20 210</div>
<div class="t" id="t109" style="right:228.06px;transform:scaleX(0.9499);transform-origin:100% 0;top:624.10px;font-size:9.8px;line-height:9.8px;color:#202124;font-weight:400;letter-spacing:-0.173px;">92,34 %</div>
<div class="t" id="t110" style="right:131.90px;transform:scaleX(0.9662);transform-origin:100% 0;top:624.10px;font-size:9.8px;line-height:9.8px;color:#202124;font-weight:400;letter-spacing:-0.105px;">32 s</div>
<div class="t" id="t111" style="right:39.06px;transform:scaleX(0.9817);transform-origin:100% 0;top:624.10px;font-size:9.8px;line-height:9.8px;color:#202124;font-weight:400;letter-spacing:-0.058px;">7,12</div>
<div style="position:absolute;left:0;top:614px;width:1024px;height:19px;background:linear-gradient(rgba(0,0,0,0),rgba(0,0,0,0.012) 40%,rgba(0,0,0,0.05))"></div></body></html>
